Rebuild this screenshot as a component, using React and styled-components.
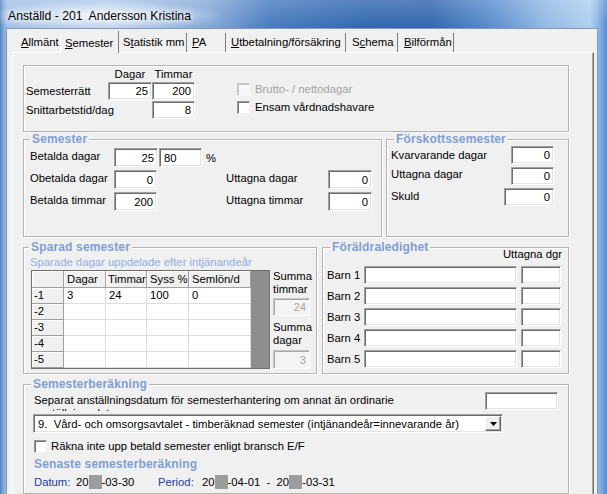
import React from "react";
import styled, { createGlobalStyle, css } from "styled-components";

const Global = createGlobalStyle`
  html, body { margin: 0; padding: 0; background: #f0f0f0; }
  body {
    font-family: "Liberation Sans", Arial, sans-serif;
    font-size: 11.3px;
    color: #000;
  }
  * { box-sizing: border-box; }
`;

const etched = css`
  border: 1px solid #b4b4b4;
  box-shadow: inset 1px 1px 0 #fff, 1px 1px 0 #fff;
`;

const sunken = css`
  border: 1px solid;
  border-color: #a0a0a0 #fff #fff #a0a0a0;
  box-shadow: inset 1px 1px 0 #6d6d6d, inset -1px -1px 0 #e3e3e3;
`;

const Window = styled.div`
  width: 607px;
  height: 494px;
  overflow: hidden;
  display: flex;
  flex-direction: column;
  background:
    linear-gradient(180deg, rgba(255,255,255,0.18) 0px, rgba(255,255,255,0) 26px),
    linear-gradient(90deg, #4f80c1 0px, #7ea6d7 3px, #a2c0e5 7px, #b3cceb 110px,
      #86a9d8 210px, #4a7cc0 270px, #346aB3 360px, #3367b1 430px, #5b8ecf 490px,
      #94bae5 545px, #b0cfef 590px, #8fb7e4 598px, #6f9fd7 603px, #5a8acb 607px);
`;

const TitleBar = styled.div`
  height: 28px;
  flex: none;
  display: flex;
  align-items: center;
  padding: 3px 0 0 8px;
  font-size: 12.2px;
  white-space: pre;
  background: radial-gradient(ellipse 125px 15px at 100px 16px,
    rgba(255,255,255,0.8), rgba(255,255,255,0));
  text-shadow: 0 0 5px #fff, 0 0 9px #fff;
`;

const Client = styled.div`
  flex: 1;
  margin: 0 9px 0 6px;
  background: #f0f0f0;
  border: 1px solid #8799b2;
  border-bottom: none;
  display: flex;
  flex-direction: column;
`;

const TabStrip = styled.div`
  height: 23px;
  flex: none;
  display: flex;
  align-items: flex-end;
  padding-left: 7px;
`;

const Tab = styled.div`
  width: ${(p) => p.$w}px;
  height: ${(p) => (p.$active ? 22 : 19)}px;
  padding: ${(p) => (p.$active ? 3 : 0)}px 0 0 ${(p) => p.$pad ?? 5}px;
  line-height: 19px;
  white-space: nowrap;
  overflow: hidden;
  background: #f0f0f0;
  border-right: ${(p) => (p.$noSep ? "none" : "1px solid #7d7d7d")};
  border-left: ${(p) => (p.$active ? "1px solid #fff" : "none")};
  margin-bottom: ${(p) => (p.$active ? -1 : 0)}px;
  position: relative;
  z-index: ${(p) => (p.$active ? 1 : 0)};
  u { text-underline-offset: 1px; }
`;

const Panel = styled.div`
  flex: 1;
  margin: 0 3px 0 5px;
  padding: 12px 24px 0 10px;
  border-top: 1px solid #fff;
  border-left: 1px solid #fff;
  border-right: 1px solid #6f6f6f;
  box-shadow: inset -1px 0 0 #a8a8a8;
  display: flex;
  flex-direction: column;
`;

const PlainGroup = styled.div`
  ${etched};
  height: 67px;
  flex: none;
  display: flex;
  padding-left: 2px;
`;

const RightsGrid = styled.div`
  display: grid;
  grid-template-columns: 82px 44px 43px;
  grid-template-rows: 15px 18px 18px;
  row-gap: 1px;
  align-items: center;
`;

const ColHead = styled.div`
  text-align: center;
  line-height: 14px;
`;

const Spacer = styled.span``;

const Label = styled.div`
  white-space: nowrap;
  line-height: 13px;
  align-self: ${(p) => (p.$top ? "start" : "center")};
  padding-top: ${(p) => p.$pt ?? 0}px;
  margin-top: ${(p) => p.$mt ?? 0}px;
  color: ${(p) => (p.$disabled ? "#a3a3a3" : "#000")};
`;

const CheckCol = styled.div`
  margin-left: 42px;
  padding-top: 17px;
  display: flex;
  flex-direction: column;
  gap: 5px;
`;

const CheckRow = styled.div`
  display: flex;
  align-items: center;
  gap: ${(p) => p.$gap ?? 5}px;
  height: 13px;
  line-height: 13px;
  color: ${(p) => (p.$disabled ? "#a3a3a3" : "#000")};
  margin-top: ${(p) => p.$mt ?? 0}px;
`;

const CheckBox = styled.span`
  width: 13px;
  height: 13px;
  flex: none;
  border: 1px solid;
  border-color: ${(p) =>
    p.$disabled ? "#c6c6c6 #f6f6f6 #f6f6f6 #c6c6c6" : "#9a9a9a #f4f4f4 #f4f4f4 #9a9a9a"};
  background: ${(p) => (p.$disabled ? "#f7f7f7" : "#fff")};
  box-shadow: inset 1px 1px 0 ${(p) => (p.$disabled ? "#c8c8c8" : "#707070")};
`;

const Field = styled.input.attrs({ readOnly: true, tabIndex: -1 })`
  width: ${(p) => p.$w}px;
  height: ${(p) => p.$h ?? 18}px;
  margin: 0;
  margin-top: ${(p) => p.$mt ?? 0}px;
  padding: 0 3px 0 4px;
  font: inherit;
  outline: none;
  text-align: ${(p) => (p.$left ? "left" : "right")};
  color: ${(p) => (p.$disabled ? "#a6a6a6" : "#000")};
  background: ${(p) => (p.$disabled ? "#f4f4f4" : "#fff")};
  ${sunken};
  ${(p) =>
    p.$disabled &&
    css`
      border-color: #c4c4c4 #fbfbfb #fbfbfb #c4c4c4;
      box-shadow: inset 1px 1px 0 #a8a8a8;
    `}
`;

const Row = styled.div`
  display: flex;
  gap: ${(p) => p.$gap}px;
  height: ${(p) => p.$h}px;
  margin-top: ${(p) => p.$mt ?? 0}px;
  flex: none;
`;

const Group = styled.fieldset`
  ${etched};
  margin: 0;
  margin-top: ${(p) => p.$mt ?? 0}px;
  padding: 0;
  min-width: 0;
  width: ${(p) => (p.$w ? `${p.$w}px` : "auto")};
  flex: ${(p) => (p.$w ? "none" : "1")};
  height: ${(p) => (p.$h ? `${p.$h}px` : "100%")};
`;

const Legend = styled.legend`
  margin-left: ${(p) => p.$ml ?? 6}px;
  padding: 0 2px;
  font-size: 12px;
  font-weight: bold;
  line-height: 14px;
  letter-spacing: 0.15px;
  color: #7f9fd5;
  background: #f0f0f0;
`;

const SemGrid = styled.div`
  display: grid;
  grid-template-columns: 84px 45px 67px 102px 44px;
  grid-auto-rows: 19px;
  row-gap: 3px;
  padding: 2px 0 0 6px;
  align-items: start;
`;

const Inline = styled.div`
  display: flex;
  align-items: center;
  gap: 4px;
`;

const StackBody = styled.div`
  display: flex;
  flex-direction: column;
  gap: ${(p) => p.$gap ?? 3}px;
  padding: ${(p) => p.$pad};
`;

const FormLine = styled.div`
  display: flex;
  align-items: center;
  justify-content: space-between;
  height: 18px;
`;

const Subtitle = styled.div`
  line-height: 14px;
  color: #8fafe0;
  white-space: nowrap;
`;

const SavedRow = styled.div`
  display: flex;
  margin: 1px 0 0 1px;
`;

const DataGrid = styled.div`
  width: 239px;
  border: 1px solid #6e6e6e;
  background: #8e8e8e;
  display: grid;
  grid-template-columns: 32px 42px 41px 42px 62px;
  grid-template-rows: 17px repeat(5, 16px);
  align-content: start;
`;

const HeadCell = styled.div`
  background: #f0f0f0;
  border-right: 1px solid #a0a0a0;
  border-bottom: 1px solid #a0a0a0;
  box-shadow: inset 1px 1px 0 #fff;
  padding-left: ${(p) => p.$pl ?? 3}px;
  line-height: ${(p) => p.$lh ?? 16}px;
  white-space: nowrap;
  overflow: hidden;
`;

const DataCell = styled.div`
  background: #fff;
  border-right: 1px solid #dedede;
  border-bottom: 1px solid #dedede;
  padding-left: 3px;
  line-height: 15px;
  white-space: nowrap;
  overflow: hidden;
`;

const SumCol = styled.div`
  display: flex;
  flex-direction: column;
  width: 37px;
  margin-left: 3px;
`;

const SumLabel = styled.div`
  line-height: 13px;
  margin-top: ${(p) => p.$mt ?? 0}px;
`;

const ParentHead = styled.div`
  text-align: right;
  width: 235px;
  line-height: 13px;
  margin: -6px 0 5px;
`;

const ParentGrid = styled.div`
  display: grid;
  grid-template-columns: 33px 153px 40px;
  grid-auto-rows: 18px;
  column-gap: 4px;
  row-gap: 3px;
  align-items: center;
`;

const CalcBody = styled.div`
  display: flex;
  flex-direction: column;
  padding: 0 10px;
`;

const CalcTop = styled.div`
  display: flex;
  align-items: flex-start;
  justify-content: space-between;
`;

const ClipLabel = styled.div`
  width: 410px;
  height: 17px;
  margin-top: 3px;
  line-height: 13px;
  overflow: hidden;
`;

const Combo = styled.div`
  width: 470px;
  height: 19px;
  margin: 3px 0 0 -1px;
  display: flex;
  align-items: center;
  padding-left: 4px;
  background: #fff;
  ${sunken};
`;

const ComboText = styled.span`
  flex: 1;
  white-space: pre;
  overflow: hidden;
`;

const DropButton = styled.span`
  width: 16px;
  height: 15px;
  margin-right: 1px;
  display: flex;
  align-items: center;
  justify-content: center;
  background: #f0f0f0;
  border: 1px solid;
  border-color: #fff #696969 #696969 #fff;
  box-shadow: inset -1px -1px 0 #a0a0a0;
`;

const SectionTitle = styled.div`
  font-size: 12px;
  font-weight: bold;
  letter-spacing: 0.15px;
  line-height: 14px;
  color: #7f9fd5;
  margin-top: ${(p) => p.$mt ?? 0}px;
`;

const DateRow = styled.div`
  display: flex;
  line-height: 16px;
  margin-top: 3px;
  white-space: pre;
`;

const DateLabel = styled.span`
  width: ${(p) => p.$w}px;
  color: #22409a;
`;

const DateValue = styled.span`
  width: ${(p) => (p.$w ? `${p.$w}px` : "auto")};
  display: flex;
  align-items: center;
`;

const Redact = styled.span`
  display: inline-block;
  width: 13px;
  height: 14px;
  background: #9c9c9c;
`;

const tabs = [
  { key: "a", label: <><u>A</u>llmänt</>, w: 46, pad: 7, noSep: true },
  { key: "s", label: <><u>S</u>emester</>, w: 59, pad: 4, active: true },
  { key: "t", label: <>S<u>t</u>atistik mm</>, w: 68, pad: 4 },
  { key: "p", label: <><u>P</u>A</>, w: 39 },
  { key: "u", label: <><u>U</u>tbetalning/försäkring</>, w: 120 },
  { key: "c", label: <>S<u>c</u>hema</>, w: 52, pad: 6 },
  { key: "b", label: <><u>B</u>ilförmån</>, w: 56, pad: 6 },
];

const saved = [
  ["-1", "3", "24", "100", "0"],
  ["-2", "", "", "", ""],
  ["-3", "", "", "", ""],
  ["-4", "", "", "", ""],
  ["-5", "", "", "", ""],
];

const Dated = ({ tail }) => (
  <>
    20<Redact />{tail}
  </>
);

export default function App() {
  return (
    <>
      <Global />
      <Window>
        <TitleBar>Anställd - 201  Andersson Kristina</TitleBar>
        <Client>
          <TabStrip>
            {tabs.map((t) => (
              <Tab key={t.key} $w={t.w} $pad={t.pad} $active={t.active} $noSep={t.noSep}>
                {t.label}
              </Tab>
            ))}
          </TabStrip>
          <Panel>
            <PlainGroup>
              <RightsGrid>
                <Spacer />
                <ColHead>Dagar</ColHead>
                <ColHead>Timmar</ColHead>
                <Label>Semesterrätt</Label>
                <Field $w={44} defaultValue="25" />
                <Field $w={43} defaultValue="200" />
                <Label>Snittarbetstid/dag</Label>
                <Spacer />
                <Field $w={43} defaultValue="8" />
              </RightsGrid>
              <CheckCol>
                <CheckRow $disabled>
                  <CheckBox $disabled />
                  Brutto- / nettodagar
                </CheckRow>
                <CheckRow>
                  <CheckBox />
                  Ensam vårdnadshavare
                </CheckRow>
              </CheckCol>
            </PlainGroup>

            <Row $gap={4} $h={105}>
              <Group $w={359}>
                <Legend $ml={6}>Semester</Legend>
                <SemGrid>
                  <Label $top $pt={2}>Betalda dagar</Label>
                  <Field $w={44} $h={19} defaultValue="25" />
                  <Inline>
                    <Field $w={43} $h={19} $left defaultValue="80" />
                    %
                  </Inline>
                  <Spacer />
                  <Spacer />
                  <Label $top $pt={2}>Obetalda dagar</Label>
                  <Field $w={43} $h={19} defaultValue="0" />
                  <Spacer />
                  <Label $top $pt={2}>Uttagna dagar</Label>
                  <Field $w={44} $h={19} defaultValue="0" />
                  <Label $top $pt={2}>Betalda timmar</Label>
                  <Field $w={43} $h={19} defaultValue="200" />
                  <Spacer />
                  <Label $top $pt={2}>Uttagna timmar</Label>
                  <Field $w={44} $h={19} defaultValue="0" />
                </SemGrid>
              </Group>
              <Group>
                <Legend $ml={7}>Förskottssemester</Legend>
                <StackBody $pad="0 14px 0 4px">
                  <FormLine>
                    <Label>Kvarvarande dagar</Label>
                    <Field $w={43} defaultValue="0" />
                  </FormLine>
                  <FormLine>
                    <Label $mt={-3}>Uttagna dagar</Label>
                    <Field $w={43} defaultValue="0" />
                  </FormLine>
                  <FormLine>
                    <Label $mt={-2}>Skuld</Label>
                    <Field $w={50} defaultValue="0" />
                  </FormLine>
                </StackBody>
              </Group>
            </Row>

            <Row $gap={5} $h={134} $mt={3}>
              <Group $w={294}>
                <Legend $ml={5}>Sparad semester</Legend>
                <StackBody $gap={0} $pad="1px 0 0 6px">
                  <Subtitle>Sparade dagar uppdelade efter intjänandeår</Subtitle>
                  <SavedRow>
                    <DataGrid>
                      <HeadCell />
                      <HeadCell>Dagar</HeadCell>
                      <HeadCell $pl={2}>Timmar</HeadCell>
                      <HeadCell>Syss %</HeadCell>
                      <HeadCell>Semlön/d</HeadCell>
                      {saved.map((r) => (
                        <React.Fragment key={r[0]}>
                          <HeadCell $pl={2} $lh={15}>{r[0]}</HeadCell>
                          <DataCell>{r[1]}</DataCell>
                          <DataCell>{r[2]}</DataCell>
                          <DataCell>{r[3]}</DataCell>
                          <DataCell>{r[4]}</DataCell>
                        </React.Fragment>
                      ))}
                    </DataGrid>
                    <SumCol>
                      <SumLabel>Summa timmar</SumLabel>
                      <Field $w={37} $mt={2} $disabled defaultValue="24" />
                      <SumLabel $mt={5}>Summa dagar</SumLabel>
                      <Field $w={37} $h={19} $mt={3} $disabled defaultValue="3" />
                    </SumCol>
                  </SavedRow>
                </StackBody>
              </Group>
              <Group>
                <Legend $ml={7}>Föräldraledighet</Legend>
                <StackBody $gap={0} $pad="0 0 0 4px">
                  <ParentHead>Uttagna dgr</ParentHead>
                  <ParentGrid>
                    {[1, 2, 3, 4, 5].map((n) => (
                      <React.Fragment key={n}>
                        <Label>Barn {n}</Label>
                        <Field $w={153} />
                        <Field $w={40} />
                      </React.Fragment>
                    ))}
                  </ParentGrid>
                </StackBody>
              </Group>
            </Row>

            <Group $h={114} $mt={3}>
              <Legend $ml={7}>Semesterberäkning</Legend>
              <CalcBody>
                <CalcTop>
                  <ClipLabel>
                    Separat anställningsdatum för semesterhantering om annat än ordinarie
                    anställningsdatum
                  </ClipLabel>
                  <Field $w={73} $mt={1} />
                </CalcTop>
                <Combo>
                  <ComboText>9.  Vård- och omsorgsavtalet - timberäknad semester (intjänandeår=innevarande år)</ComboText>
                  <DropButton>
                    <svg width="7" height="4" viewBox="0 0 7 4">
                      <polygon points="0,0 7,0 3.5,4" fill="#000" />
                    </svg>
                  </DropButton>
                </Combo>
                <CheckRow $gap={4} $mt={7}>
                  <CheckBox />
                  Räkna inte upp betald semester enligt bransch E/F
                </CheckRow>
                <SectionTitle $mt={4}>Senaste semesterberäkning</SectionTitle>
                <DateRow>
                  <DateLabel $w={42}>Datum:</DateLabel>
                  <DateValue $w={82}>
                    <Dated tail="-03-30" />
                  </DateValue>
                  <DateLabel $w={44}>Period:</DateLabel>
                  <DateValue>
                    <Dated tail="-04-01  -  " />
                    <Dated tail="-03-31" />
                  </DateValue>
                </DateRow>
              </CalcBody>
            </Group>
          </Panel>
        </Client>
      </Window>
    </>
  );
}
